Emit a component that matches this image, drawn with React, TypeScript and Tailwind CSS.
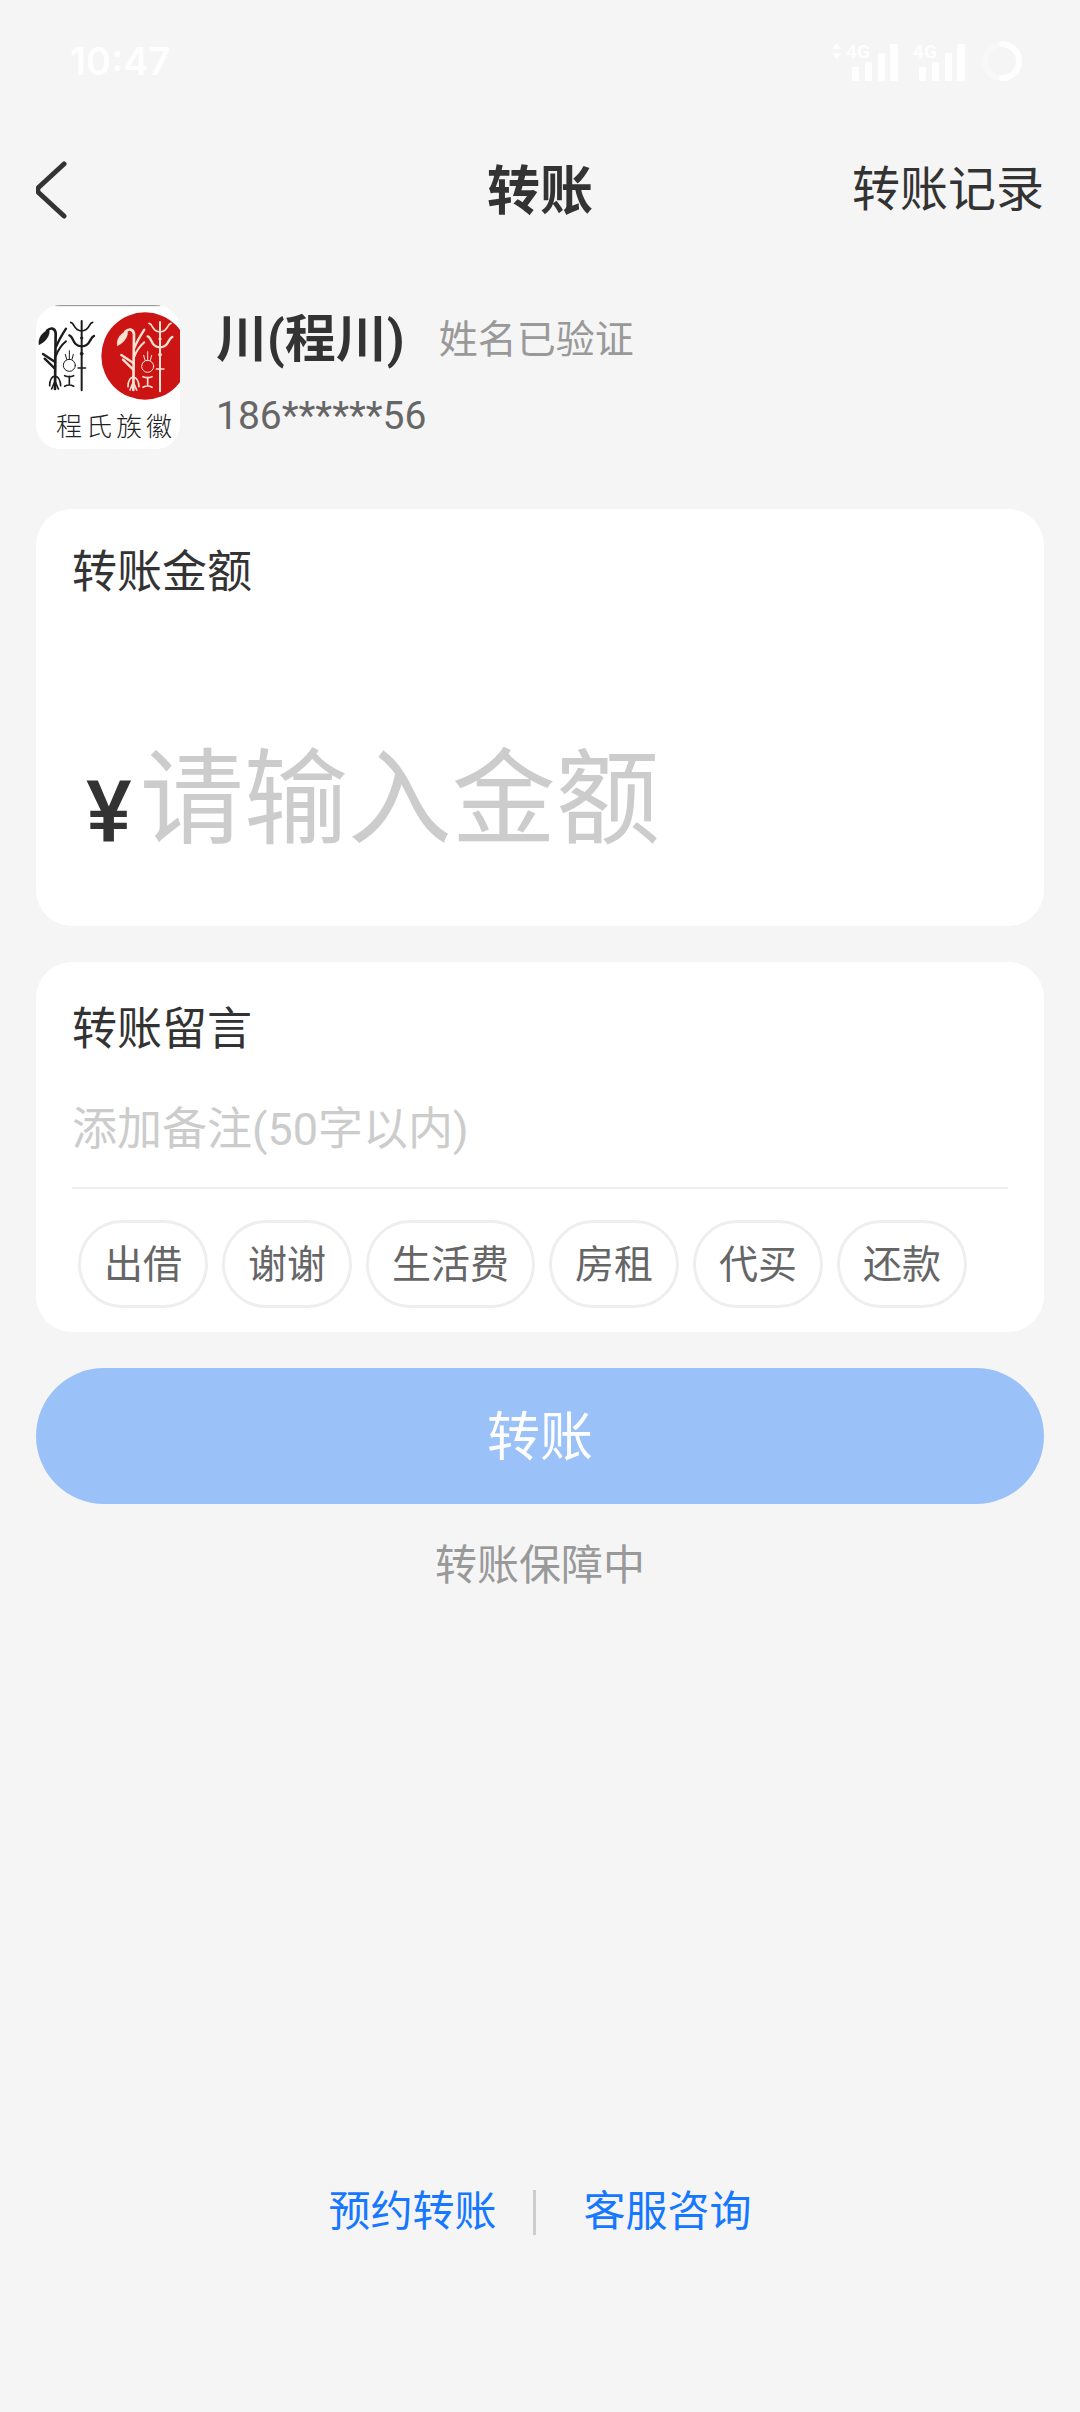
import { useState } from "react";

const QUICK_NOTES = ["出借", "谢谢", "生活费", "房租", "代买", "还款"];

function SignalBars({ active }: { active?: boolean }) {
  return (
    <svg width="67" height="40" viewBox="0 0 67 40" fill="currentColor" aria-hidden="true">
      {active && <path d="M1 8 L5.500 2 L10 8Z M1 12 L5.500 18 L10 12Z" />}
      <text x="15" y="17" fontSize="19" fontWeight="700" fontFamily="Roboto, sans-serif">
        4G
      </text>
      <rect x="21" y="26" width="7" height="14" rx="1" />
      <rect x="34" y="21" width="7" height="19" rx="1" />
      <rect x="47" y="12" width="7" height="28" rx="1" />
      <rect x="59" y="3" width="8" height="37" rx="1" />
    </svg>
  );
}

function StatusBar() {
  return (
    <div className="flex h-[122px] items-center justify-between pr-[57px] pl-[70px] text-[#fefefe]">
      <span className="font-['Inter',sans-serif] text-[38px] leading-none font-semibold">10:47</span>
      <div className="flex items-center">
        <SignalBars active />
        <SignalBars />
        <svg className="ml-4" width="42" height="42" viewBox="0 0 42 42" fill="none" strokeWidth="6" aria-hidden="true">
          <circle cx="21" cy="21" r="17" stroke="#f8f8f8" />
          <path d="M21 4 A17 17 0 0 1 21 38" stroke="currentColor" strokeLinecap="round" />
        </svg>
      </div>
    </div>
  );
}

/* Ancient-script emblem: a grain stalk, a small figure and a double trident. */
function Emblem() {
  return (
    <g fill="none" stroke="currentColor" strokeLinecap="round" strokeLinejoin="round">
      <path d="M56 163 C52 144 66 124 86 119 C91 132 76 156 56 163Z" fill="currentColor" strokeWidth="1" />
      <path d="M80 121 C90 111 104 112 106 128 L104 296" strokeWidth="8" />
      <path d="M137 115 C126 132 116 148 108 168" strokeWidth="7" />
      <path d="M137 153 C125 163 114 178 107 196" strokeWidth="6" />
      <path d="M68 191 L103 214 M73 205 L103 234" strokeWidth="7" />
      <path d="M88 286 C88 268 94 259 104 257 C114 259 120 268 121 286 M94 296 L104 272 L114 296" strokeWidth="5" />
      <circle cx="147" cy="225" r="18" strokeWidth="3" />
      <path d="M147 208 V181 M135 192 L139 207 M159 192 L155 207" strokeWidth="3" />
      <path d="M133 256 Q147 262 160 256 M147 258 V284 M133 288 Q147 280 160 288" strokeWidth="5" />
      <path d="M184 92 V300" strokeWidth="6" />
      <path d="M151 96 C164 98 158 121 184 122 C210 121 204 98 217 96" strokeWidth="5" />
      <path d="M147 135 C160 138 156 167 184 168 C212 167 208 140 221 137" strokeWidth="7" />
      <path d="M173 233 H196" strokeWidth="4" />
      <circle cx="184" cy="143" r="4" fill="currentColor" />
      <circle cx="184" cy="190" r="5" fill="currentColor" />
    </g>
  );
}

function Avatar() {
  return (
    <div className="relative size-36 shrink-0 overflow-hidden rounded-3xl bg-white">
      <svg className="size-full" viewBox="47 44 432 432" aria-hidden="true">
        <path d="M105 46 H420" stroke="#8a8a8a" strokeWidth="3" />
        <g className="text-[#1c1c1c]">
          <Emblem />
        </g>
        <circle cx="374" cy="197" r="131" fill="#cc1415" />
        <g className="text-[#fbe3d3]" transform="translate(235 3)">
          <Emblem />
        </g>
      </svg>
      <div className="absolute right-2 bottom-2 left-5 flex justify-between font-['Noto_Sans_CJK_SC',sans-serif] text-[26px] leading-8 font-light text-[#222]">
        <span>程</span>
        <span>氏</span>
        <span>族</span>
        <span>徽</span>
      </div>
    </div>
  );
}

export default function App() {
  const [amount, setAmount] = useState("");
  const [note, setNote] = useState("");

  return (
    <div className="flex min-h-screen flex-col bg-[#f5f5f5] font-['Roboto','Noto_Sans_CJK_SC',sans-serif] text-[#333]">
      <StatusBar />

      <header className="grid h-[136px] grid-cols-[1fr_auto_1fr] items-center px-9">
        <button type="button" aria-label="返回" className="justify-self-start">
          <svg width="32" height="58" viewBox="0 0 32 58" fill="none" stroke="#333" strokeWidth="5" strokeLinecap="round" strokeLinejoin="round" aria-hidden="true">
            <path d="M28 3 L3 26 Q0 29 3 32 L28 55" />
          </svg>
        </button>
        <h1 className="pt-1 text-[53px] leading-none font-bold">转账</h1>
        <a href="#records" className="justify-self-end text-[48px] leading-none">
          转账记录
        </a>
      </header>

      <main className="flex flex-col px-9 pt-[47px]">
        <section className="flex gap-9">
          <Avatar />
          <div className="flex flex-col">
            <div className="flex items-center gap-[34px]">
              <h2 className="text-[51px] leading-[70px] font-bold">川(程川)</h2>
              <span className="text-[39px] leading-[68px] text-[#999]">姓名已验证</span>
            </div>
            <span className="mt-2 text-[39px] leading-[66px] text-[#666]">186******56</span>
          </div>
        </section>

        <section className="mt-[60px] rounded-[36px] bg-white px-9 pt-[38px] pb-[49px]">
          <label htmlFor="amount" className="block text-[45px] leading-[52px]">
            转账金额
          </label>
          <div className="mt-[126px] flex items-end pl-3.5">
            <span className="pb-5 text-[86px] leading-[88px] font-medium">¥</span>
            <input
              id="amount"
              inputMode="decimal"
              value={amount}
              onChange={(e) => setAmount(e.target.value)}
              placeholder="请输入金额"
              className="ml-2 h-[152px] min-w-0 flex-1 bg-transparent text-[104px] outline-none placeholder:text-[#ccc]"
            />
          </div>
        </section>

        <section className="mt-9 rounded-[36px] bg-white px-9 pt-[42px] pb-6">
          <label htmlFor="note" className="block text-[45px] leading-[52px]">
            转账留言
          </label>
          <input
            id="note"
            maxLength={50}
            value={note}
            onChange={(e) => setNote(e.target.value)}
            placeholder="添加备注(50字以内)"
            className="mt-[42px] h-16 w-full bg-transparent text-[45px] outline-none placeholder:text-[#ccc]"
          />
          <div className="mt-[25px] flex flex-wrap gap-[14px] border-t-2 border-[#eee] pt-[31px] pl-1.5">
            {QUICK_NOTES.map((text) => (
              <button
                key={text}
                type="button"
                onClick={() => setNote(text)}
                className="h-[88px] rounded-full border-3 border-[#eee] px-[23px] pt-0.5 text-[39px] leading-none text-[#666]"
              >
                {text}
              </button>
            ))}
          </div>
        </section>

        <button type="button" className="mt-9 h-[136px] rounded-full bg-[#9bc1f9] pt-1 text-[53px] leading-none text-white">
          转账
        </button>
        <p className="mt-8 text-center text-[42px] leading-[60px] text-[#999]">转账保障中</p>
      </main>

      <footer className="mt-auto flex items-center justify-center pb-[170px] text-[42px] leading-[60px] text-[#1677ff]">
        <a href="#schedule">预约转账</a>
        <span className="mr-12 ml-9 h-[45px] w-[3px] bg-[#ccc]" />
        <a href="#service">客服咨询</a>
      </footer>
    </div>
  );
}
